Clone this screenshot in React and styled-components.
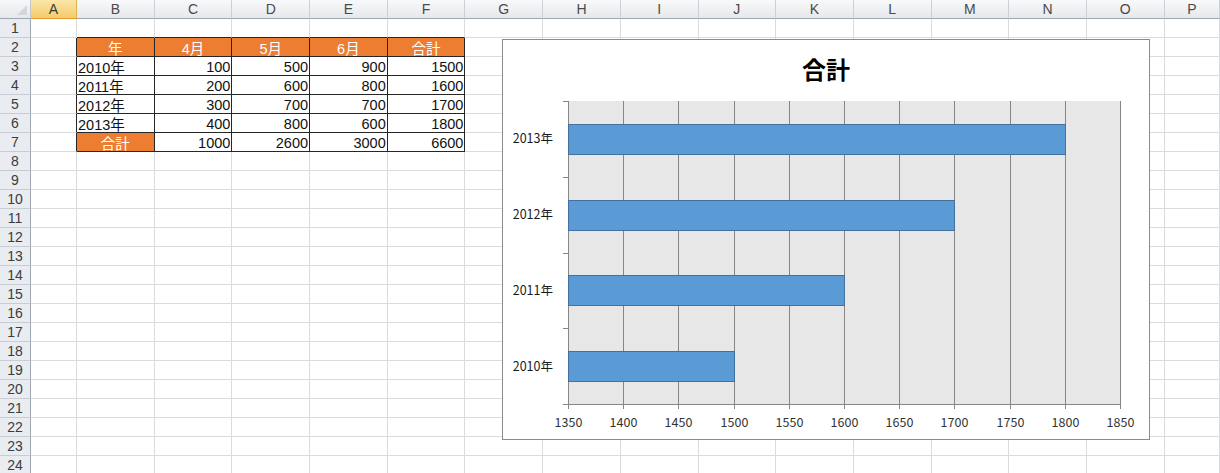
import React from "react";
import styled, { createGlobalStyle, css } from "styled-components";

const Global = createGlobalStyle`
  html, body { margin: 0; padding: 0; background: #fff; overflow: hidden; }
  body { font-family: "Liberation Sans", "Noto Sans CJK JP", sans-serif; }
`;

const COLS = ["A","B","C","D","E","F","G","H","I","J","K","L","M","N","O","P"];
const ROWS = 24;

const Page = styled.div`
  position: relative;
  width: 1220px;
  height: 473px;
  overflow: hidden;
`;

const Sheet = styled.div`
  display: grid;
  grid-template-columns: 31px 46px repeat(14, 77.7px) 1fr;
  grid-template-rows: 19px repeat(${ROWS}, 19px);
`;

const Corner = styled.div`
  position: relative;
  box-sizing: border-box;
  background: linear-gradient(#f6f7f9, #e6e8eb);
  border-right: 1px solid #c3c8cf;
  border-bottom: 1px solid #9ea6b1;
  &::after {
    content: "";
    position: absolute;
    right: 3px;
    bottom: 3px;
    border-style: solid;
    border-width: 0 0 10px 10px;
    border-color: transparent transparent #d3d7dc transparent;
  }
`;

const ColHead = styled.div`
  box-sizing: border-box;
  display: flex;
  align-items: center;
  justify-content: center;
  font-size: 14px;
  color: #4a4a4a;
  background: linear-gradient(#f8f9fa, #e6e8ec);
  border-right: 1px solid #cdd1d7;
  border-bottom: 1px solid #9ea6b1;
  ${(p) =>
    p.$active &&
    css`
      background: linear-gradient(#fbe6a8, #f4cb6c);
      border-right-color: #e2b14f;
      border-bottom-color: #e39b2c;
      color: #3a3a3a;
    `}
`;

const RowHead = styled.div`
  box-sizing: border-box;
  display: flex;
  align-items: center;
  justify-content: center;
  font-size: 14px;
  color: #3c3c3c;
  background: #e9ecf0;
  border-right: 1px solid #9ea6b1;
  border-bottom: 1px solid #c8cdd4;
`;

const Cell = styled.div`
  box-sizing: border-box;
  display: flex;
  align-items: center;
  justify-content: ${(p) => (p.$align === "right" ? "flex-end" : p.$align === "center" ? "center" : "flex-start")};
  padding: 1px 1px 0 1px;
  font-size: 14.5px;
  color: #111;
  white-space: nowrap;
  overflow: hidden;
  border-right: 1px solid ${(p) => (p.$rb ? "#262626" : "#d9dbdd")};
  border-bottom: 1px solid ${(p) => (p.$bb ? "#262626" : "#d9dbdd")};
  background: #fff;
  ${(p) =>
    p.$head &&
    css`
      background: #ed7d31;
      color: #fff;
    `}
`;

const ChartBox = styled.div`
  position: absolute;
  left: 502px;
  top: 39px;
  width: 648px;
  height: 401px;
  box-sizing: border-box;
  border: 1px solid #8c8c8c;
  background: #fff;
  display: flex;
  flex-direction: column;
`;

const ChartTitle = styled.div`
  height: 54px;
  display: flex;
  align-items: center;
  justify-content: center;
  font-family: "Noto Sans CJK JP", sans-serif;
  font-weight: 700;
  font-size: 24px;
  color: #000;
  padding-top: 2px;
  box-sizing: border-box;
`;

const ChartSvg = styled.svg`
  display: block;
  font-family: "Noto Sans CJK JP", "Noto Sans", sans-serif;
  font-size: 12.5px;
`;

const table = {
  2: ["年", "4月", "5月", "6月", "合計"],
  3: ["2010年", 100, 500, 900, 1500],
  4: ["2011年", 200, 600, 800, 1600],
  5: ["2012年", 300, 700, 700, 1700],
  6: ["2013年", 400, 800, 600, 1800],
  7: ["合計", 1000, 2600, 3000, 6600],
};

function renderCell(r, ci) {
  const inTable = r >= 2 && r <= 7 && ci >= 1 && ci <= 5;
  const rb = inTable || (ci === 0 && r >= 2 && r <= 7);
  const bb = inTable || (r === 1 && ci >= 1 && ci <= 5);
  let content = null;
  let align = "left";
  let head = false;
  if (inTable) {
    const v = table[r][ci - 1];
    content = v;
    if (r === 2) {
      head = true;
      align = "center";
    } else if (r === 7 && ci === 1) {
      head = true;
      align = "center";
    } else if (typeof v === "number") {
      align = "right";
    }
  }
  return (
    <Cell key={`${r}-${ci}`} $rb={rb} $bb={bb} $align={align} $head={head}>
      {content}
    </Cell>
  );
}

const data = [
  { label: "2013年", value: 1800 },
  { label: "2012年", value: 1700 },
  { label: "2011年", value: 1600 },
  { label: "2010年", value: 1500 },
];

function BarChart() {
  const W = 646;
  const H = 345;
  const x0 = 65;
  const x1 = 617;
  const y0 = 7;
  const y1 = 310;
  const min = 1350;
  const max = 1850;
  const sx = (v) => x0 + ((v - min) / (max - min)) * (x1 - x0);
  const band = (y1 - y0) / data.length;
  const ticks = [];
  for (let v = min; v <= max; v += 50) ticks.push(v);
  return (
    <ChartSvg width={W} height={H} viewBox={`0 0 ${W} ${H}`}>
      <rect x={x0} y={y0} width={x1 - x0} height={y1 - y0} fill="#e7e7e7" />
      {ticks.map((v) => {
        const x = Math.round(sx(v)) + 0.5;
        return (
          <g key={v}>
            <line x1={x} y1={y0} x2={x} y2={y1 + 5} stroke="#868686" strokeWidth="1" />
            <text x={x} y={y1 + 23} textAnchor="middle" fill="#333">
              {v}
            </text>
          </g>
        );
      })}
      <line x1={x0 - 5} y1={y1 + 0.5} x2={x1} y2={y1 + 0.5} stroke="#868686" />
      {[0, 1, 2, 3, 4].map((j) => {
        const y = Math.round(y0 + j * band) + 0.5;
        return <line key={j} x1={x0 - 5} y1={y} x2={x0} y2={y} stroke="#868686" />;
      })}
      {data.map((d, i) => {
        const cy = y0 + band * (i + 0.5);
        const top = Math.round(cy - 15) + 0.5;
        const right = Math.round(sx(d.value)) + 0.5;
        const left = Math.round(sx(min)) + 0.5;
        return (
          <g key={d.label}>
            <rect x={left} y={top} width={right - left} height={30} fill="#5b9bd5" stroke="#41719c" strokeWidth="1" />
            <text x={50} y={cy + 4.5} textAnchor="end" fill="#1a1a1a">
              {d.label}
            </text>
          </g>
        );
      })}
    </ChartSvg>
  );
}

export default function App() {
  const cells = [];
  cells.push(<Corner key="corner" />);
  COLS.forEach((c) => cells.push(<ColHead key={`h-${c}`} $active={c === "A"}>{c}</ColHead>));
  for (let r = 1; r <= ROWS; r++) {
    cells.push(<RowHead key={`r-${r}`}>{r}</RowHead>);
    COLS.forEach((_, ci) => cells.push(renderCell(r, ci)));
  }
  return (
    <Page>
      <Global />
      <Sheet>{cells}</Sheet>
      <ChartBox>
        <ChartTitle>合計</ChartTitle>
        <BarChart />
      </ChartBox>
    </Page>
  );
}
